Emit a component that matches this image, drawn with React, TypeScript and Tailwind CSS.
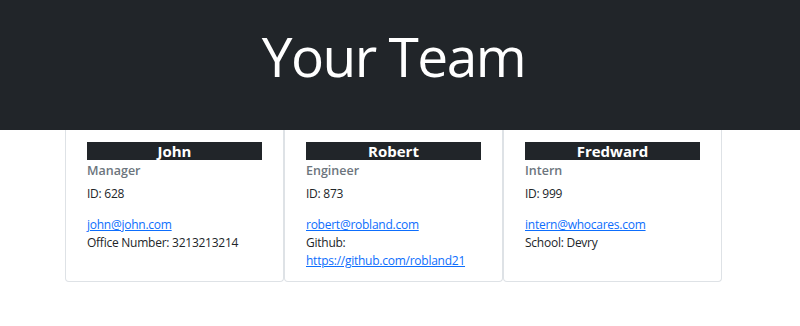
const team = [
  {
    name: "John",
    role: "Manager",
    id: 628,
    email: "john@john.com",
    extra: <p>Office Number: 3213213214</p>,
  },
  {
    name: "Robert",
    role: "Engineer",
    id: 873,
    email: "robert@robland.com",
    extra: (
      <p>
        Github:
        <br />
        <a href="#" className="text-[#0d6efd] underline">
          https://github.com/robland21
        </a>
      </p>
    ),
  },
  {
    name: "Fredward",
    role: "Intern",
    id: 999,
    email: "intern@whocares.com",
    extra: <p>School: Devry</p>,
  },
];

export default function App() {
  return (
    <div className="min-h-[326px] bg-white font-['Open_Sans',sans-serif] text-[#212529]">
      <header className="flex h-[130px] items-start justify-center bg-[#212529] pr-[13px] pt-[14px]">
        <h1 className="text-[55px] font-normal leading-[84px] tracking-[-1.5px] text-white">Your Team</h1>
      </header>

      <div className="ml-[65px] flex w-[657px]">
        {team.map((m) => (
          <div key={m.name} className="w-[219px] rounded-b-[4px] border border-t-0 border-[#dee2e6] px-[21px] pb-[11px] pt-[12px]">
            <h2 className="h-[18px] bg-[#212529] text-center text-[15px] font-bold leading-[18px] text-white">
              {m.name}
            </h2>
            <h3 className="mt-[2px] text-[12.5px] font-semibold leading-[18px] text-[#6c757d]">{m.role}</h3>
            <div className="text-[12px] leading-[18px] tracking-[-0.25px]">
              <p className="mt-[5px]">ID: {m.id}</p>
              <a href="#" className="mt-[13px] block text-[#0d6efd] underline">
                {m.email}
              </a>
              {m.extra}
            </div>
          </div>
        ))}
      </div>
    </div>
  );
}
